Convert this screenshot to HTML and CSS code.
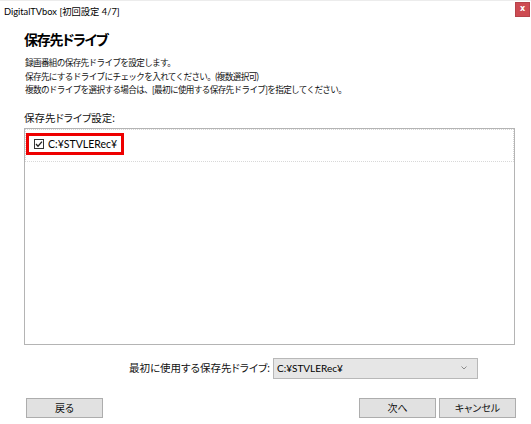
FILE: index.html
```html
<!DOCTYPE html>
<html lang="ja">
<head>
<meta charset="utf-8">
<title>DigitalTVbox</title>
<link rel="stylesheet" href="styles.css">
</head>
<body>
<div class="window">
  <div class="titlebar">
    <span class="title">DigitalTVbox [初回設定 4/7]</span>
    <span class="close">x</span>
  </div>
  <div class="content">
    <h1 class="heading">保存先ドライブ</h1>
    <p class="desc">録画番組の保存先ドライブを設定します。<br>保存先にするドライブにチェックを入れてください。(複数選択可)<br>複数のドライブを選択する場合は、[最初に使用する保存先ドライブ]を指定してください。</p>
    <div class="label">保存先ドライブ設定:</div>
    <div class="listbox">
      <div class="row">
        <span class="item">
          <svg class="cb" width="10" height="10" viewBox="0 0 10 10"><rect x="0.5" y="0.5" width="9" height="9" fill="#fff" stroke="#333"/><polyline points="2,5 4,7.2 8,2.6" fill="none" stroke="#222" stroke-width="1.3"/></svg>
          <span class="item-text">C:¥STVLERec¥</span>
        </span>
      </div>
    </div>
    <div class="first-drive">
      <span class="fd-label">最初に使用する保存先ドライブ:</span>
      <div class="combo">
        <span class="combo-text">C:¥STVLERec¥</span>
        <svg class="chev" width="6" height="4" viewBox="0 0 6 4"><polyline points="0.5,0.5 3,3 5.5,0.5" fill="none" stroke="#8a8a8a" stroke-width="1"/></svg>
      </div>
    </div>
    <div class="buttons">
      <button class="btn">戻る</button>
      <span class="spacer"></span>
      <button class="btn">次へ</button>
      <button class="btn">キャンセル</button>
    </div>
  </div>
</div>
</body>
</html>
```
FILE: styles.css
```css
html, body {
  margin: 0;
  padding: 0;
  background: #fff;
}
body {
  font-family: "Lato", "Noto Sans CJK JP", sans-serif;
  font-feature-settings: "palt";
  color: #000;
}
.window {
  width: 531px;
  height: 424px;
  box-sizing: border-box;
  border-top: 1px solid #ececec;
  background: #fff;
}
.titlebar {
  height: 21px;
  display: flex;
  align-items: flex-start;
  justify-content: space-between;
}
.title {
  font-size: 9.3px;
  line-height: 14px;
  margin-top: 4px;
  margin-left: 4px;
  color: #000;
}
.close {
  width: 15px;
  height: 15px;
  margin-top: 1px;
  margin-right: 1px;
  box-sizing: border-box;
  background: #cd4b52;
  border: 1px solid #b5434a;
  color: #fff;
  font-family: "DejaVu Sans", sans-serif;
  font-weight: bold;
  font-size: 8px;
  line-height: 12px;
  text-align: center;
}
.content {
  padding: 0 16px 0 24px;
}
.heading {
  margin: 9px 0 0 0;
  font-size: 14px;
  line-height: 18px;
  font-weight: bold;
  letter-spacing: -1.3px;
  color: #000;
}
.desc {
  margin: 8px 0 0 1px;
  font-size: 8.6px;
  line-height: 13.5px;
  letter-spacing: -0.65px;
  font-feature-settings: normal;
  color: #111;
}
.label {
  margin-top: 13px;
  font-size: 10.5px;
  line-height: 14px;
  color: #111;
}
.listbox {
  margin-top: 3px;
  width: 491px;
  height: 217px;
  box-sizing: border-box;
  border: 1px solid #b4b4b4;
}
.row {
  height: 33px;
  box-sizing: border-box;
  border: 1px dotted #d8d8d8;
  padding-top: 3px;
}
.item {
  display: inline-flex;
  align-items: center;
  height: 22px;
  box-sizing: border-box;
  border: 3px solid #ee0000;
  padding: 0 4px 0 5px;
  gap: 4px;
}
.cb {
  display: block;
}
.item-text {
  font-size: 10.5px;
  line-height: 14px;
  color: #000;
}
.first-drive {
  margin-top: 13px;
  margin-right: 37px;
  display: flex;
  justify-content: flex-end;
  align-items: center;
  gap: 3px;
}
.fd-label {
  font-size: 10.5px;
  line-height: 14px;
  color: #111;
}
.combo {
  width: 205px;
  height: 21px;
  box-sizing: border-box;
  background: #e6e6e6;
  border: 1px solid #b8b8b8;
  display: flex;
  align-items: center;
  justify-content: space-between;
  padding: 0 10px 0 3px;
}
.combo-text {
  font-size: 10px;
  line-height: 14px;
  color: #000;
}
.chev {
  display: block;
}
.buttons {
  margin-top: 19px;
  display: flex;
  gap: 3px;
  padding-left: 2px;
}
.spacer {
  flex: 1;
}
.btn {
  width: 77px;
  height: 20px;
  box-sizing: border-box;
  background: #e1e1e1;
  border: 1px solid #adadad;
  font-family: "Lato", "Noto Sans CJK JP", sans-serif;
  font-feature-settings: "palt";
  font-size: 10px;
  line-height: 14px;
  color: #111;
  padding: 0;
  margin: 0;
}
.buttons .btn:last-child {
  margin-right: -1px;
}
```
